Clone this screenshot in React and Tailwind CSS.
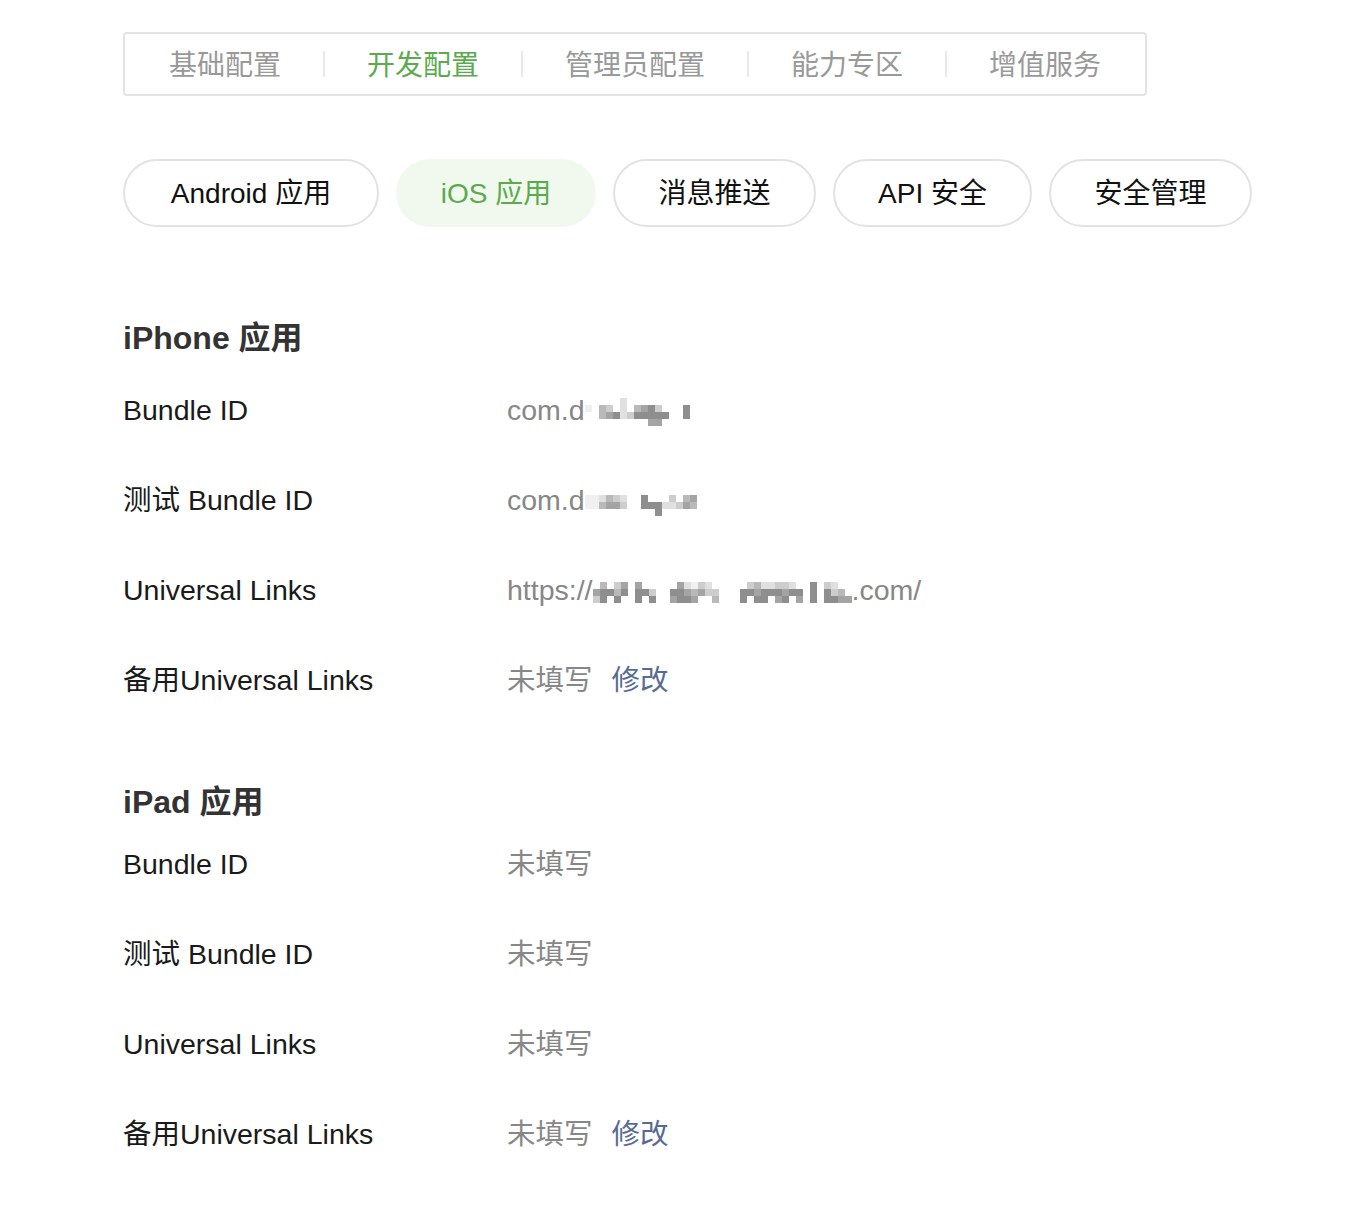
import React from 'react';

const FONT = "font-['Liberation_Sans','Noto_Sans_CJK_SC',sans-serif]";

const topTabs = ['基础配置', '开发配置', '管理员配置', '能力专区', '增值服务'];

const pills = [
  { label: 'Android 应用', width: 'w-[256px]' },
  { label: 'iOS 应用', width: 'w-[200px]', active: true },
  { label: '消息推送', width: 'w-[203px]' },
  { label: 'API 安全', width: 'w-[199px]' },
  { label: '安全管理', width: 'w-[203px]' },
];

const shades = {
  '0': 'bg-transparent',
  '1': 'bg-[#f0f0f0]',
  '2': 'bg-[#e0e0e0]',
  '3': 'bg-[#cdcdcd]',
  '4': 'bg-[#b9b9b9]',
  '5': 'bg-[#a4a4a4]',
  '6': 'bg-[#8e8e8e]',
  '7': 'bg-[#7c7c7c]',
};

// pixelated (masked) part of a value
const Mosaic = ({ rows }) => (
  <span className="inline-flex flex-col align-middle">
    {rows.map((row, i) => (
      <span key={i} className="flex">
        {row.split('').map((c, j) => (
          <span key={j} className={`block shrink-0 w-[7px] h-[7px] ${shades[c]}`} />
        ))}
      </span>
    ))}
  </span>
);

const iphoneRows = [
  {
    label: 'Bundle ID',
    value: (
      <>
        com.d
        <Mosaic rows={['0000020000000000', '1043020456300060', '0045623666660060', '0000000005500000']} />
      </>
    ),
  },
  {
    label: '测试 Bundle ID',
    value: (
      <>
        com.d
        <Mosaic rows={['0000000000000000', '1124320060003045', '1145530066622354', '0000000000600000']} />
      </>
    ),
  },
  {
    label: 'Universal Links',
    value: (
      <>
        https://
        <Mosaic
          rows={[
            '0403505000005213200000342233200603200',
            '5664606630066545330006656665660606340',
            '3606006060056650040006066056050606655',
          ]}
        />
        .com/
      </>
    ),
  },
  { label: '备用Universal Links', value: '未填写', edit: true },
];

const ipadRows = [
  { label: 'Bundle ID', value: '未填写' },
  { label: '测试 Bundle ID', value: '未填写' },
  { label: 'Universal Links', value: '未填写' },
  { label: '备用Universal Links', value: '未填写', edit: true },
];

const InfoRow = ({ row }) => (
  <div className="flex items-center h-[40px] leading-[40px] text-[28.5px]">
    <div className="w-[384px] shrink-0 text-[#1a1a1a]">{row.label}</div>
    <div className="text-[#878787] whitespace-nowrap">
      {row.value}
      {row.edit && <span className="ml-[19px] text-[#576b95] cursor-pointer">修改</span>}
    </div>
  </div>
);

const App = () => {
  return (
    <div className={`${FONT} bg-white min-h-[1206px] w-[1356px] pl-[123px] pt-[32px]`}>
      <div className="inline-flex items-center h-[64px] border-2 border-[#e3e3e3] rounded-[4px] px-[2px]">
        {topTabs.map((tab, i) => (
          <React.Fragment key={tab}>
            {i > 0 && <div className="w-[2px] h-[26px] bg-[#e8e8e8]" />}
            <div
              className={`px-[42px] pt-[3px] text-[28px] leading-[40px] ${
                i === 1 ? 'text-[#5aab4e]' : 'text-[#999999]'
              }`}
            >
              {tab}
            </div>
          </React.Fragment>
        ))}
      </div>

      <div className="flex gap-[17px] mt-[63px]">
        {pills.map((pill) => (
          <div
            key={pill.label}
            className={`${pill.width} h-[68px] pt-[1px] rounded-full flex items-center justify-center text-[28px] ${
              pill.active
                ? 'bg-[#f1f9ef] text-[#5aab4e] border-2 border-[#f1f9ef]'
                : 'border-2 border-[#e2e2e2] text-[#111111]'
            }`}
          >
            {pill.label}
          </div>
        ))}
      </div>

      <h2 className="mt-[91px] h-[40px] leading-[40px] text-[32px] font-bold text-[#333333]">iPhone 应用</h2>
      <div className="mt-[32px] flex flex-col gap-[50px]">
        {iphoneRows.map((row) => (
          <InfoRow key={row.label} row={row} />
        ))}
      </div>

      <h2 className="mt-[82px] h-[40px] leading-[40px] text-[32px] font-bold text-[#333333]">iPad 应用</h2>
      <div className="mt-[22px] flex flex-col gap-[50px]">
        {ipadRows.map((row) => (
          <InfoRow key={row.label} row={row} />
        ))}
      </div>
    </div>
  );
};

export default App;
